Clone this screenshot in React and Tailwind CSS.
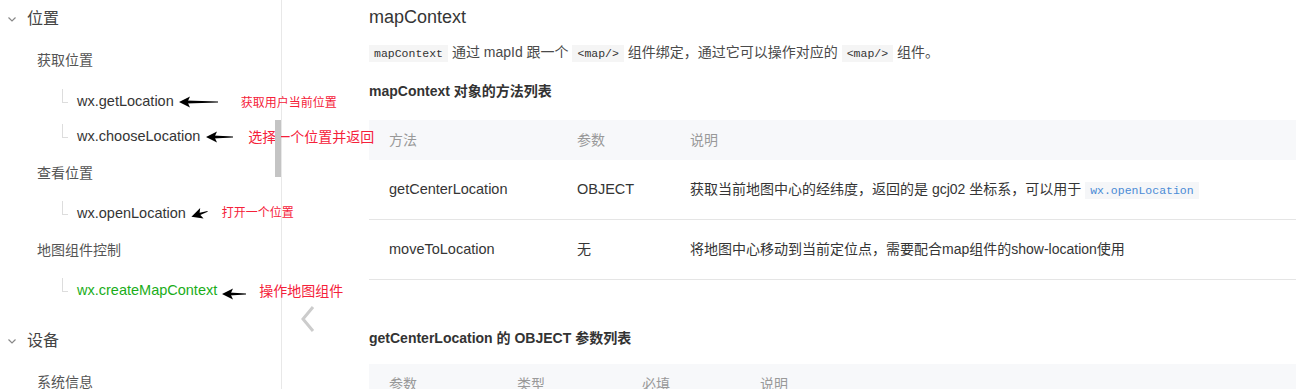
import React from "react";

const font = { fontFamily: '"Liberation Sans", "Noto Sans CJK SC", sans-serif' };

// hand drawn arrow pointing left
const Arrow = ({ w = 40, tilt = 0 }) => (
  <svg width={w} height="14" viewBox={`0 0 ${w} 14`} className="shrink-0 overflow-visible">
    <g transform={`rotate(${tilt} ${w / 2} 7)`}>
      <path d={`M0 7 L11 1.5 L8.5 7 L11 12.5 Z`} fill="#000" />
      <path d={`M7 5.6 L${w} 6.6 L${w} 7.4 L7 8.4 Z`} fill="#000" />
    </g>
  </svg>
);

const Chevron = () => (
  <svg width="10" height="10" viewBox="0 0 10 10" className="shrink-0">
    <path d="M1.5 3.5 L5 7 L8.5 3.5" fill="none" stroke="#888" strokeWidth="1.2" />
  </svg>
);

const Code = ({ children, blue }) => (
  <code
    className={`inline-block px-[5px] py-[1px] leading-[15px] text-[11.5px] align-middle ${
      blue ? "bg-[#f5f6f8] text-[#4a8bd6]" : "bg-[#f5f5f5] text-[#333]"
    }`}
    style={{ fontFamily: '"Liberation Mono", monospace' }}
  >
    {children}
  </code>
);

const Leaf = ({ children, green }) => (
  <div className="flex items-center h-[35px] pl-[62px] whitespace-nowrap">
    <span className="self-start mt-[5px] h-[14px] w-[6px] border-l border-b border-[#ddd] shrink-0" />
    <span className={`ml-[9px] text-[14.5px] ${green ? "text-[#1aad19]" : "text-[#353535]"}`}>
      {children}
    </span>
  </div>
);

const Note = ({ children, size = "text-[12px]" }) => (
  <span className={`${size} text-[#f5213a] whitespace-nowrap`}>{children}</span>
);

export default function App() {
  return (
    <div className="flex w-[1296px] h-[389px] overflow-hidden bg-white" style={font}>
      {/* sidebar */}
      <aside className="relative w-[282px] shrink-0 border-r border-[#e8e8e8] z-10">
        <div className="flex items-center h-[38px] pl-[7px] gap-[10px]">
          <Chevron />
          <span className="text-[16px] text-[#444]">位置</span>
        </div>
        <div className="flex items-center h-[44px] pl-[37px] text-[14px] text-[#555]">获取位置</div>
        <div className="pt-[2px]">
          <div className="flex items-center">
            <Leaf>wx.getLocation</Leaf>
            <span className="ml-[5px] flex items-center">
              <Arrow w={39} />
              <span className="ml-[23px]">
                <Note>获取用户当前位置</Note>
              </span>
            </span>
          </div>
          <div className="flex items-center">
            <Leaf>wx.chooseLocation</Leaf>
            <span className="ml-[6px] flex items-center">
              <Arrow w={27} />
              <span className="ml-[15px]">
                <Note size="text-[14px]">选择一个位置并返回</Note>
              </span>
            </span>
          </div>
        </div>
        <div className="flex items-center h-[38px] pl-[37px] text-[14px] text-[#555]">查看位置</div>
        <div className="pt-[4px]">
          <div className="flex items-center">
            <Leaf>wx.openLocation</Leaf>
            <span className="ml-[5px] flex items-center">
              <Arrow w={17} tilt={-18} />
              <span className="ml-[14px] -mt-[3px]">
                <Note>打开一个位置</Note>
              </span>
            </span>
          </div>
        </div>
        <div className="flex items-center h-[38px] pl-[37px] text-[14px] text-[#555]">地图组件控制</div>
        <div className="pt-[4px]">
          <div className="flex items-center">
            <Leaf green>wx.createMapContext</Leaf>
            <span className="ml-[5px] mt-[6px] flex items-center">
              <Arrow w={24} />
              <span className="ml-[13px] -mt-[6px]">
                <Note size="text-[14px]">操作地图组件</Note>
              </span>
            </span>
          </div>
        </div>
        <div className="flex items-center h-[38px] mt-[14px] pl-[7px] gap-[10px]">
          <Chevron />
          <span className="text-[16px] text-[#444]">设备</span>
        </div>
        <div className="flex items-center h-[44px] pl-[37px] text-[14px] text-[#555]">系统信息</div>

        {/* scrollbar thumb */}
        <div className="absolute right-0 top-[120px] w-[6px] h-[57px] bg-[#c4c4c4]" />
      </aside>

      {/* content */}
      <main className="relative flex-1 pl-[87px] pt-[6px] text-[#353535]">
        <svg
          width="16"
          height="28"
          viewBox="0 0 16 28"
          className="absolute left-[18px] top-[305px]"
        >
          <path d="M13 2 L3 14 L13 26" fill="none" stroke="#ccc" strokeWidth="3" />
        </svg>

        <h1 className="text-[18px] leading-[22px] text-[#353535]">mapContext</h1>

        <p className="mt-[12px] leading-[24px] text-[14px] text-[#4a4a4a] whitespace-nowrap">
          <Code>mapContext</Code> 通过 mapId 跟一个 <Code>&lt;map/&gt;</Code> 组件绑定，通过它可以操作对应的{" "}
          <Code>&lt;map/&gt;</Code> 组件。
        </p>

        <h3 className="mt-[17px] leading-[20px] text-[14px] font-bold text-[#333]">
          mapContext 对象的方法列表
        </h3>

        <div className="mt-[19px] text-[14px]">
          <div className="flex items-center h-[40px] bg-[#f7f8fa] text-[#999]">
            <div className="w-[208px] pl-[20px]">方法</div>
            <div className="w-[113px]">参数</div>
            <div className="flex-1">说明</div>
          </div>
          <div className="flex items-center h-[60px] border-b border-[#e5e5e5]">
            <div className="w-[208px] pl-[20px] text-[14.5px]">getCenterLocation</div>
            <div className="w-[113px] text-[14.5px]">OBJECT</div>
            <div className="flex-1 whitespace-nowrap">
              获取当前地图中心的经纬度，返回的是 gcj02 坐标系，可以用于{" "}
              <Code blue>wx.openLocation</Code>
            </div>
          </div>
          <div className="flex items-center h-[60px] border-b border-[#e5e5e5]">
            <div className="w-[208px] pl-[20px] text-[14.5px]">moveToLocation</div>
            <div className="w-[113px]">无</div>
            <div className="flex-1 whitespace-nowrap">
              将地图中心移动到当前定位点，需要配合map组件的show-location使用
            </div>
          </div>
        </div>

        <h3 className="mt-[48px] leading-[20px] text-[14px] font-bold text-[#333]">
          getCenterLocation 的 OBJECT 参数列表
        </h3>

        <div className="mt-[16px] text-[14px]">
          <div className="flex items-center h-[40px] bg-[#f7f8fa] text-[#999]">
            <div className="w-[148px] pl-[20px]">参数</div>
            <div className="w-[125px]">类型</div>
            <div className="w-[118px]">必填</div>
            <div className="flex-1">说明</div>
          </div>
        </div>
      </main>
    </div>
  );
}
